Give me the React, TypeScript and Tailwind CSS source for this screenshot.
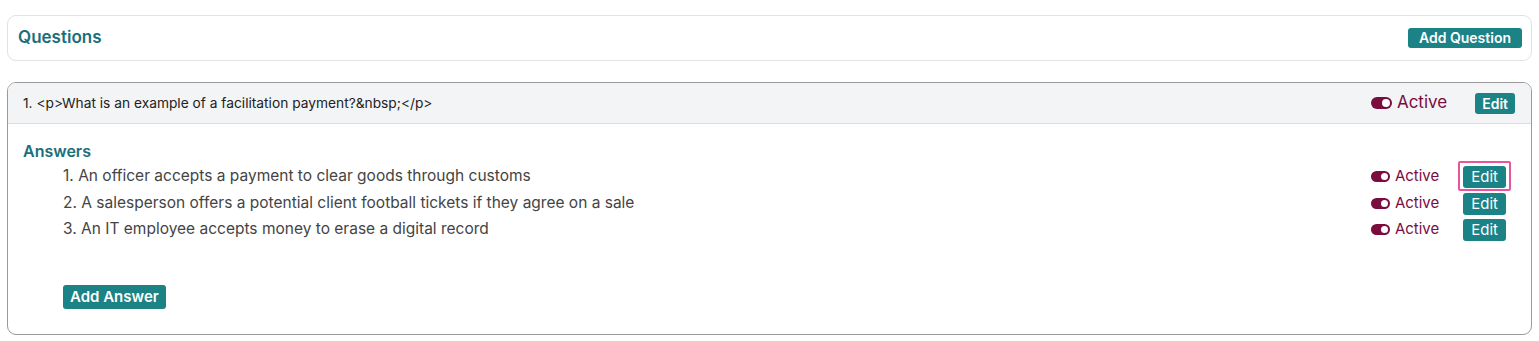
const answers = [
  'An officer accepts a payment to clear goods through customs',
  'A salesperson offers a potential client football tickets if they agree on a sale',
  'An IT employee accepts money to erase a digital record',
];

const Toggle = ({ small }: { small?: boolean }) => (
  <span className={`relative inline-block rounded-full bg-[#7a0c3e] ${small ? 'h-[11px] w-[19px]' : 'h-[12px] w-[21px]'}`}>
    <span className={`absolute top-[2px] rounded-full bg-white ${small ? 'right-[2px] h-[7px] w-[7px]' : 'right-[2px] h-[8px] w-[8px]'}`} />
  </span>
);

const EditButton = ({ highlight }: { highlight?: boolean }) => (
  <span className={highlight ? 'rounded-[2px] border-2 border-[#e8559b] p-[3px]' : 'p-[5px]'}>
    <button className="rounded-[3px] bg-[#1b8286] px-[8px] py-[2px] text-[15px] leading-[18px] text-white">Edit</button>
  </span>
);

export default function App() {
  return (
    <div className="min-h-[341px] bg-white px-[7px] pt-[15px] text-[#333]" style={{ fontFamily: 'Inter, "Open Sans", sans-serif' }}>
      <div className="flex h-[46px] items-center justify-between rounded-[9px] border border-[#e2e2e2] pl-[10px] pr-[9px]">
        <h2 className="text-[17px] font-semibold text-[#1a6f7c]">Questions</h2>
        <button className="rounded-[3px] bg-[#1b8286] px-[11px] py-[1px] text-[14px] font-semibold leading-[18px] text-white">Add Question</button>
      </div>

      <div className="mt-[21px] overflow-hidden rounded-[9px] border border-[#9a9a9a]">
        <div className="flex h-[41px] items-center justify-between border-b border-[#dcdcdc] bg-[#f3f4f6] pl-[15px] pr-[16px]">
          <span className="text-[13.75px] text-[#222]">1. &lt;p&gt;What is an example of a facilitation payment?&amp;nbsp;&lt;/p&gt;</span>
          <div className="flex items-center">
            <Toggle />
            <span className="ml-[5px] text-[17px] text-[#7a0c3e]">Active</span>
            <button className="ml-[28px] rounded-[3px] bg-[#1b8286] px-[7px] py-[1px] text-[14px] font-semibold leading-[19px] text-white">Edit</button>
          </div>
        </div>

        <div className="pb-[25px] pl-[15px] pr-[20px] pt-[17px]">
          <h3 className="text-[16px] font-semibold leading-[20px] text-[#1a6f7c]">Answers</h3>
          <div className="mt-[1px] pl-[40px]">
            {answers.map((a, i) => (
              <div key={i} className={`flex items-center justify-between ${i === 0 ? 'h-[28px]' : 'h-[26px]'}`}>
                <span className="text-[15.5px] text-[#444]">{i + 1}. {a}</span>
                <div className="flex items-center">
                  <Toggle small />
                  <span className="ml-[5px] text-[15px] text-[#7a0c3e]">Active</span>
                  <span className="ml-[19px]">
                    <EditButton highlight={i === 0} />
                  </span>
                </div>
              </div>
            ))}
          </div>
          <button className="ml-[40px] mt-[43px] rounded-[3px] bg-[#1b8286] px-[7px] py-[2px] text-[15px] font-semibold leading-[20px] text-white">Add Answer</button>
        </div>
      </div>
    </div>
  );
}
